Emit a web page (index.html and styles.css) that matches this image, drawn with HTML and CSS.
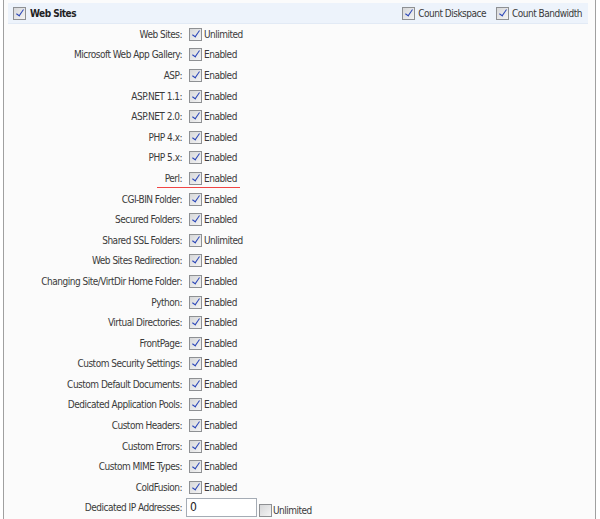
FILE: index.html
```html
<!DOCTYPE html>
<html>
<head>
<meta charset="utf-8">
<link rel="stylesheet" href="styles.css">
</head>
<body>
<div class="panel">
  <div class="head">
    <label class="head-left"><span class="cb on"></span><b>Web Sites</b></label>
    <div class="head-right">
      <label class="opt"><span class="cb on"></span>Count Diskspace</label>
      <label class="opt"><span class="cb on"></span>Count Bandwidth</label>
    </div>
  </div>
  <div class="rows">
    <div class="row"><span class="lbl">Web Sites:</span><span class="val"><span class="cb on"></span>Unlimited</span></div>
    <div class="row"><span class="lbl">Microsoft Web App Gallery:</span><span class="val"><span class="cb on"></span>Enabled</span></div>
    <div class="row"><span class="lbl">ASP:</span><span class="val"><span class="cb on"></span>Enabled</span></div>
    <div class="row"><span class="lbl">ASP.NET 1.1:</span><span class="val"><span class="cb on"></span>Enabled</span></div>
    <div class="row"><span class="lbl">ASP.NET 2.0:</span><span class="val"><span class="cb on"></span>Enabled</span></div>
    <div class="row"><span class="lbl">PHP 4.x:</span><span class="val"><span class="cb on"></span>Enabled</span></div>
    <div class="row"><span class="lbl">PHP 5.x:</span><span class="val"><span class="cb on"></span>Enabled</span></div>
    <div class="row mark"><span class="lbl">Perl:</span><span class="val"><span class="cb on"></span>Enabled</span><span class="redline"></span></div>
    <div class="row"><span class="lbl">CGI-BIN Folder:</span><span class="val"><span class="cb on"></span>Enabled</span></div>
    <div class="row"><span class="lbl">Secured Folders:</span><span class="val"><span class="cb on"></span>Enabled</span></div>
    <div class="row"><span class="lbl">Shared SSL Folders:</span><span class="val"><span class="cb on"></span>Unlimited</span></div>
    <div class="row"><span class="lbl">Web Sites Redirection:</span><span class="val"><span class="cb on"></span>Enabled</span></div>
    <div class="row"><span class="lbl">Changing Site/VirtDir Home Folder:</span><span class="val"><span class="cb on"></span>Enabled</span></div>
    <div class="row"><span class="lbl">Python:</span><span class="val"><span class="cb on"></span>Enabled</span></div>
    <div class="row"><span class="lbl">Virtual Directories:</span><span class="val"><span class="cb on"></span>Enabled</span></div>
    <div class="row"><span class="lbl">FrontPage:</span><span class="val"><span class="cb on"></span>Enabled</span></div>
    <div class="row"><span class="lbl">Custom Security Settings:</span><span class="val"><span class="cb on"></span>Enabled</span></div>
    <div class="row"><span class="lbl">Custom Default Documents:</span><span class="val"><span class="cb on"></span>Enabled</span></div>
    <div class="row"><span class="lbl">Dedicated Application Pools:</span><span class="val"><span class="cb on"></span>Enabled</span></div>
    <div class="row"><span class="lbl">Custom Headers:</span><span class="val"><span class="cb on"></span>Enabled</span></div>
    <div class="row"><span class="lbl">Custom Errors:</span><span class="val"><span class="cb on"></span>Enabled</span></div>
    <div class="row"><span class="lbl">Custom MIME Types:</span><span class="val"><span class="cb on"></span>Enabled</span></div>
    <div class="row"><span class="lbl">ColdFusion:</span><span class="val"><span class="cb on"></span>Enabled</span></div>
    <div class="row ip"><span class="lbl">Dedicated IP Addresses:</span><span class="val"><span class="txt">0</span><span class="unl"><span class="cb"></span>Unlimited</span></span></div>
  </div>
</div>
</body>
</html>
```

FILE: styles.css
```css
html, body {
  margin: 0;
  padding: 0;
  background: #ffffff;
}
body {
  font-family: "DejaVu Sans Condensed", "DejaVu Sans", sans-serif;
  font-size: 10px;
  letter-spacing: -0.5px;
  color: #3a3a3a;
  overflow: hidden;
}
.panel {
  margin-left: 3px;
  width: 593px;
  height: 519px;
  border-left: 1px solid #a0a0a0;
  border-right: 1px solid #a0a0a0;
  background: #fbfbfb;
  padding-top: 3px;
  box-sizing: border-box;
}
.head {
  margin: 0 7px 0 4px;
  height: 21px;
  background: #edf3fb;
  border-bottom: 1px solid #e2eaf5;
  display: flex;
  align-items: center;
  justify-content: space-between;
  padding: 0 6px 0 5px;
  box-sizing: border-box;
}
.head-left {
  display: flex;
  align-items: center;
  gap: 4px;
}
.head-left b {
  font-weight: bold;
  color: #222;
}
.head-right {
  display: flex;
  align-items: center;
  gap: 10px;
}
.opt {
  display: flex;
  align-items: center;
  gap: 3px;
}
.cb {
  display: inline-block;
  width: 11px;
  height: 11px;
  border: 1px solid #8e9093;
  background: linear-gradient(135deg, #d6d7d9, #f4f4f4);
  position: relative;
  flex: none;
}
.cb.on::after {
  content: "";
  position: absolute;
  left: 4px;
  top: 0px;
  width: 3px;
  height: 7px;
  border: solid #2b46b8;
  border-width: 0 1.6px 1.6px 0;
  transform: rotate(35deg);
}
.rows {
  display: flex;
  flex-direction: column;
}
.row {
  height: 20.6px;
  display: grid;
  grid-template-columns: 178px auto;
  column-gap: 7px;
  align-items: center;
  position: relative;
}
.lbl {
  text-align: right;
  white-space: nowrap;
}
.val {
  display: flex;
  align-items: center;
  gap: 2px;
}
.redline {
  position: absolute;
  left: 153px;
  width: 83px;
  top: 18.8px;
  height: 1px;
  background: #f04545;
}
.ip .val {
  align-items: flex-start;
  gap: 2px;
  margin-left: -3px;
}
.txt {
  width: 66px;
  height: 17px;
  border: 1px solid #a5acb5;
  background: #fff;
  font-size: 12px;
  letter-spacing: 0;
  line-height: 17px;
  padding-left: 3px;
  color: #222;
}
.unl {
  display: flex;
  align-items: center;
  gap: 1px;
  margin-top: 6px;
}
```
